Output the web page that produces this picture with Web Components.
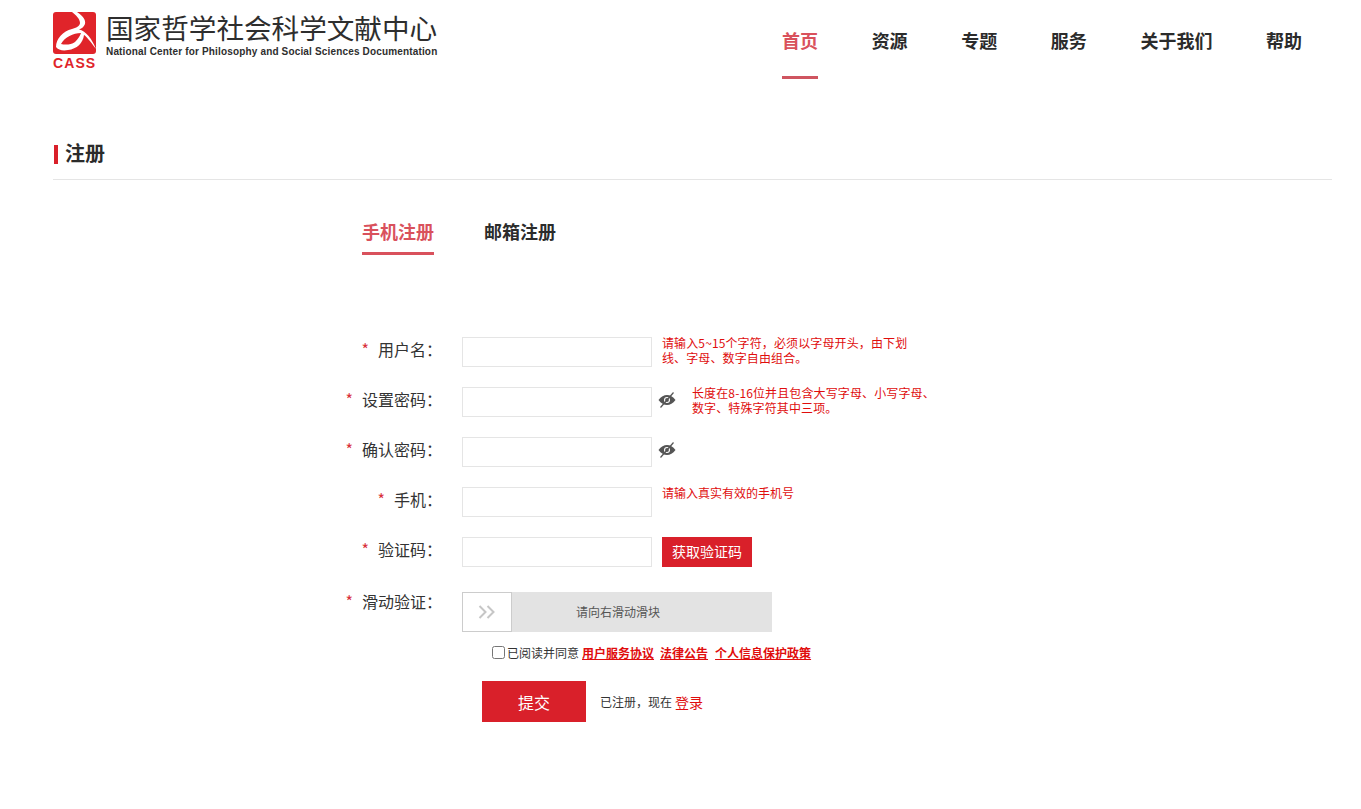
<!DOCTYPE html>
<html lang="zh-CN">
<head>
<meta charset="utf-8">
<title>注册</title>
<style>
  html, body { margin: 0; background: #fff; }
  body { font-family: "Noto Sans CJK SC", "Liberation Sans", sans-serif; color: #333; }
</style>
</head>
<body>
<site-header></site-header>
<register-page>
  <page-title>注册</page-title>
  <reg-tabs></reg-tabs>
  <form-row label="用户名" wide hint="请输入5~15个字符，必须以字母开头，由下划线、字母、数字自由组合。"></form-row>
  <form-row label="设置密码" eye wide hint="长度在8-16位并且包含大写字母、小写字母、数字、特殊字符其中三项。"></form-row>
  <form-row label="确认密码" eye></form-row>
  <form-row label="手机" hint="请输入真实有效的手机号"></form-row>
  <form-row label="验证码"><code-button>获取验证码</code-button></form-row>
  <form-row label="滑动验证" flush><slide-verify></slide-verify></form-row>
  <agree-row></agree-row>
  <submit-row></submit-row>
</register-page>

<script>
class SiteHeader extends HTMLElement {
  constructor() {
    super();
    this.attachShadow({mode: "open"});
    const items = ["首页", "资源", "专题", "服务", "关于我们", "帮助"];
    this.shadowRoot.innerHTML = `
    <style>
      :host {
        display: flex;
        justify-content: space-between;
        align-items: flex-start;
        height: 79px;
        padding: 0 59px 0 53px;
      }
      .logo { display: flex; margin-top: 12px; }
      .mark { display: flex; flex-direction: column; width: 43px; }
      .mark svg { display: block; }
      .cass {
        margin-top: 2px;
        font: bold 14px/14px "Liberation Sans", sans-serif;
        letter-spacing: 1.1px;
        color: #e0242a;
        white-space: nowrap;
      }
      .names { margin-left: 10px; color: #2e2e2e; }
      .cn {
        margin-top: 3px;
        font-family: "Liberation Sans", "Noto Sans CJK SC", sans-serif;
        font-size: 27.6px;
        line-height: 30px;
        white-space: nowrap;
      }
      .en {
        margin-top: 1px;
        font: bold 10px/11px "Liberation Sans", sans-serif;
        letter-spacing: 0.16px;
        white-space: nowrap;
      }
      nav { display: flex; gap: 53.6px; }
      a {
        display: block;
        padding: 26px 0 22px;
        border-bottom: 3px solid transparent;
        font-size: 18px;
        line-height: 28px;
        font-weight: bold;
        color: #2b2b2b;
      }
      a.active { color: #d9515c; border-bottom-color: #cf5560; }
    </style>
    <div class="logo">
      <div class="mark">
        <svg width="43" height="42" viewBox="0 0 43 42">
          <rect width="43" height="42" rx="3" fill="#e0242a"/>
          <path d="M19 0 L24 0 C30 4 33 8 32 12 C31 15 28 17 26 17.5 C33 19 39 27 43 37 C37 29 33 24 31 23 C30 31 24 37 15 38 C10 39 5 38 3 35 C3 27 10 19 19 17 C23 16 27 14 27 11 C27 7 23 3 19 0 Z M8 32 C12 33 18 33 22 30 C25 27 27 24 28 21 C20 21 12 25 8 32 Z" fill="#fff" fill-rule="evenodd"/>
        </svg>
        <div class="cass">CASS</div>
      </div>
      <div class="names">
        <div class="cn">国家哲学社会科学文献中心</div>
        <div class="en">National Center for Philosophy and Social Sciences Documentation</div>
      </div>
    </div>
    <nav>${items.map((t, i) => `<a class="${i === 0 ? "active" : ""}">${t}</a>`).join("")}</nav>
    `;
  }
}

class RegisterPage extends HTMLElement {
  constructor() {
    super();
    this.attachShadow({mode: "open"});
    this.shadowRoot.innerHTML = `
    <style>
      :host {
        display: block;
        padding: 0 29px 0 53px;
      }
    </style>
    <slot></slot>
    `;
  }
}

class PageTitle extends HTMLElement {
  constructor() {
    super();
    this.attachShadow({mode: "open"});
    this.shadowRoot.innerHTML = `
    <style>
      :host {
        display: block;
        margin-top: 66px;
        padding-bottom: 15px;
        border-bottom: 1px solid #e5e5e5;
      }
      h2 {
        margin: 0 0 0 1px;
        padding: 0 0 4px 7px;
        border-left: 4px solid #d9202a;
        font-size: 20px;
        line-height: 15px;
        font-weight: bold;
        color: #2b2b2b;
      }
    </style>
    <h2><slot></slot></h2>
    `;
  }
}

class RegTabs extends HTMLElement {
  constructor() {
    super();
    this.attachShadow({mode: "open"});
    this.shadowRoot.innerHTML = `
    <style>
      :host {
        display: flex;
        gap: 50px;
        margin: 39px 0 82px 309px;
      }
      span {
        padding-bottom: 9px;
        border-bottom: 3px solid transparent;
        font-size: 18px;
        line-height: 24px;
        font-weight: bold;
        color: #2b2b2b;
      }
      .active { color: #d9515c; border-bottom-color: #d9515c; }
    </style>
    <span class="active">手机注册</span>
    <span>邮箱注册</span>
    `;
  }
}

class FormRow extends HTMLElement {
  constructor() {
    super();
    this.attachShadow({mode: "open"});
  }

  connectedCallback() {
    const label = this.getAttribute("label");
    const hint = this.getAttribute("hint");
    const eye = this.hasAttribute("eye");
    const field = this.hasAttribute("flush") ? "" : `<input type="text">`;
    this.shadowRoot.innerHTML = `
    <style>
      :host {
        display: flex;
        align-items: flex-start;
        margin: 0 0 20px 287px;
      }
      :host([flush]) { margin-top: 25px; margin-bottom: 11px; }
      label {
        flex: none;
        width: 102px;
        margin-right: 20px;
        padding-top: 2px;
        text-align: right;
        font-size: 16px;
        line-height: 20px;
        color: #333;
      }
      :host([flush]) label { padding-top: 0; margin-top: -1px; }
      i {
        margin-right: 9px;
        font-style: normal;
        color: #d9313a;
      }
      input {
        box-sizing: border-box;
        width: 190px;
        height: 30px;
        margin: 0;
        padding: 0 8px;
        border: 1px solid #e5e5e5;
        background: #fff;
        outline: none;
      }
      svg { flex: none; margin: 5px 0 0 6px; }
      .hint {
        width: 248px;
        margin: -2px 0 0 10px;
        font-size: 12px;
        line-height: 15px;
        color: #e00d0d;
      }
      /* digits are a bit wider in the reference font */
      :host([wide]) .hint { letter-spacing: 0.12px; }
      svg + .hint { margin-left: 16px; }
      ::slotted(code-button) { margin-left: 10px; }
    </style>
    <label><i>*</i>${label}：</label>
    ${field}
    <slot></slot>
    ${eye ? `<svg width="18" height="16" viewBox="0 0 18 16">
      <path d="M0.5 8 C3 4.5 6 3 9 3 C12 3 15 4.5 17.5 8 C15 11.5 12 13 9 13 C6 13 3 11.5 0.5 8 Z" fill="#555"/>
      <circle cx="9" cy="8" r="3" fill="#fff"/>
      <circle cx="9" cy="8" r="1.9" fill="#555"/>
      <path d="M15.5 0.5 L2.5 15.5" stroke="#555" stroke-width="1.2"/>
    </svg>` : ""}
    ${hint ? `<div class="hint">${hint}</div>` : ""}
    `;
  }
}

class CodeButton extends HTMLElement {
  constructor() {
    super();
    this.attachShadow({mode: "open"});
    this.shadowRoot.innerHTML = `
    <style>
      :host {
        display: block;
        width: 90px;
        height: 30px;
        background: #d9202a;
        color: #fff;
        text-align: center;
        font-size: 14px;
        line-height: 28px;
      }
    </style>
    <slot></slot>
    `;
  }
}

class SlideVerify extends HTMLElement {
  constructor() {
    super();
    this.attachShadow({mode: "open"});
    this.shadowRoot.innerHTML = `
    <style>
      :host {
        display: block;
        position: relative;
        width: 310px;
        height: 40px;
        background: #e3e3e3;
        text-align: center;
        text-indent: 2px;
        font-size: 12px;
        line-height: 40px;
        color: #555;
      }
      .handle {
        position: absolute;
        left: 0;
        top: 0;
        box-sizing: border-box;
        display: flex;
        align-items: center;
        justify-content: center;
        width: 50px;
        height: 40px;
        border: 1px solid #ccc;
        background: #fff;
      }
    </style>
    请向右滑动滑块
    <div class="handle">
      <svg width="18" height="14" viewBox="0 0 18 14" fill="none" stroke="#c6c6c6" stroke-width="2">
        <path d="M1.5 1 L7.5 7 L1.5 13"/>
        <path d="M9.5 1 L15.5 7 L9.5 13"/>
      </svg>
    </div>
    `;
  }
}

class AgreeRow extends HTMLElement {
  constructor() {
    super();
    this.attachShadow({mode: "open"});
    this.shadowRoot.innerHTML = `
    <style>
      :host {
        display: flex;
        align-items: center;
        height: 18px;
        margin-left: 439px;
        font-size: 12px;
        color: #333;
      }
      input { width: 13px; height: 13px; margin: 0 2px 0 0; }
      span { margin-right: 1px; }
      a {
        margin-left: 2px;
        margin-right: 4px;
        font-weight: bold;
        color: #e00d0d;
        text-decoration: underline;
      }
      a:last-child { margin-left: 3px; }
    </style>
    <input type="checkbox">
    <span>已阅读并同意</span>
    <a>用户服务协议</a>
    <a>法律公告</a>
    <a>个人信息保护政策</a>
    `;
  }
}

class SubmitRow extends HTMLElement {
  constructor() {
    super();
    this.attachShadow({mode: "open"});
    this.shadowRoot.innerHTML = `
    <style>
      :host {
        display: flex;
        align-items: center;
        margin: 20px 0 0 429px;
        font-size: 12px;
        color: #333;
      }
      button {
        width: 104px;
        height: 41px;
        margin: 0 14px 0 0;
        padding: 0;
        border: 0;
        background: #d9202a;
        color: #fff;
        font: 16px "Noto Sans CJK SC", sans-serif;
      }
      a { margin-left: 3px; font-size: 14px; color: #e00d0d; }
    </style>
    <button type="button">提交</button>
    <span>已注册，现在</span>
    <a>登录</a>
    `;
  }
}

customElements.define("site-header", SiteHeader);
customElements.define("register-page", RegisterPage);
customElements.define("page-title", PageTitle);
customElements.define("reg-tabs", RegTabs);
customElements.define("form-row", FormRow);
customElements.define("code-button", CodeButton);
customElements.define("slide-verify", SlideVerify);
customElements.define("agree-row", AgreeRow);
customElements.define("submit-row", SubmitRow);
</script>
</body>
</html>
